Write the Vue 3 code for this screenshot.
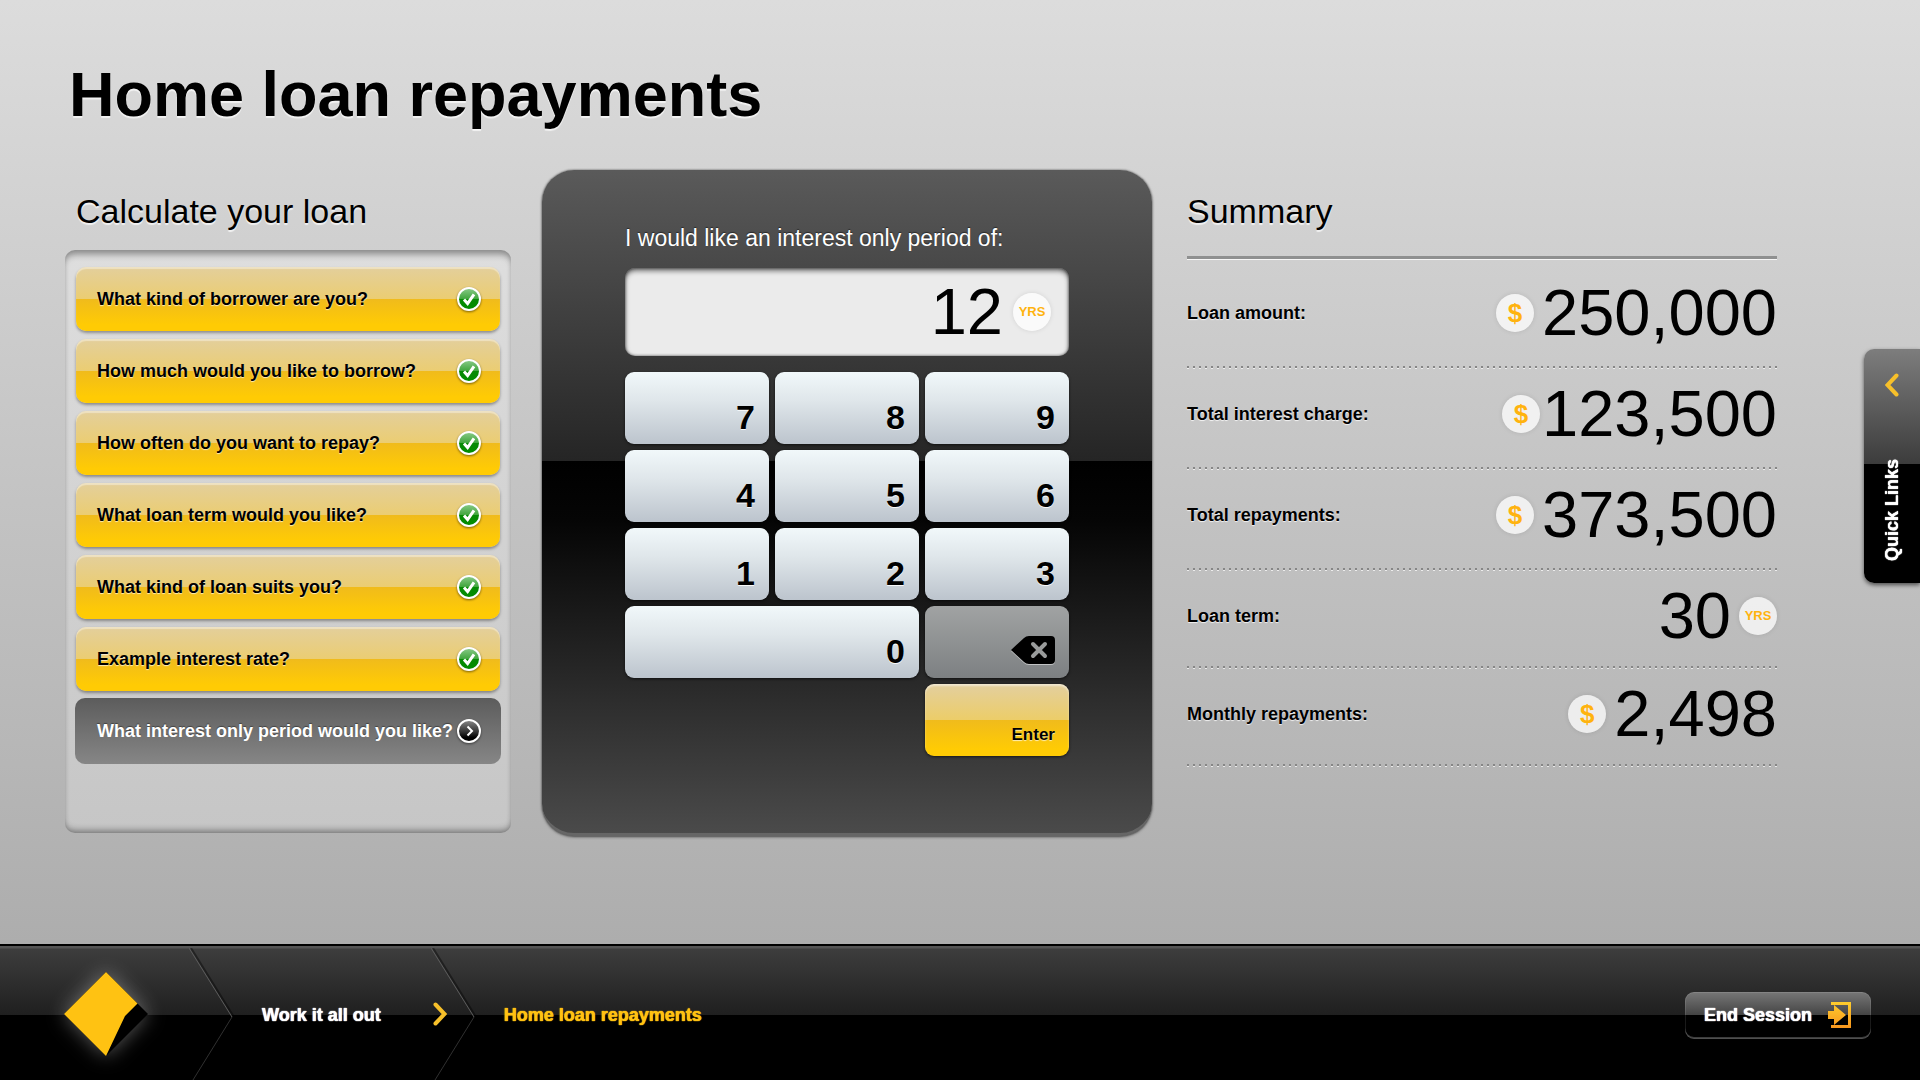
<script setup>
import { ref } from 'vue'

const steps = [
  'What kind of borrower are you?',
  'How much would you like to borrow?',
  'How often do you want to repay?',
  'What loan term would you like?',
  'What kind of loan suits you?',
  'Example interest rate?',
]

const digits = ['7', '8', '9', '4', '5', '6', '1', '2', '3', '0']

const summary = [
  { label: 'Loan amount:', unit: '$', value: '250,000' },
  { label: 'Total interest charge:', unit: '$', value: '123,500' },
  { label: 'Total repayments:', unit: '$', value: '373,500' },
  { label: 'Loan term:', unit: 'YRS', value: '30' },
  { label: 'Monthly repayments:', unit: '$', value: '2,498' },
]

const period = ref('12')
const press = (d) => { period.value += d }
const erase = () => { period.value = period.value.slice(0, -1) }
</script>

<template>
  <div class="page">
    <h1>Home loan repayments</h1>

    <main class="columns">
      <section class="steps">
        <h2>Calculate your loan</h2>
        <ol class="step-list">
          <li v-for="step in steps" :key="step">
            <button type="button" class="step">
              <span>{{ step }}</span>
              <svg class="step-icon" viewBox="0 0 26 26" aria-hidden="true">
                <defs>
                  <linearGradient id="tick-fill" x1="0" y1="0" x2="0" y2="1">
                    <stop offset="0" stop-color="#8ccb8a" />
                    <stop offset="0.5" stop-color="#3fa53c" />
                    <stop offset="0.52" stop-color="#078a05" />
                    <stop offset="1" stop-color="#028d00" />
                  </linearGradient>
                </defs>
                <circle cx="13" cy="13" r="11" fill="url(#tick-fill)" stroke="#fff" stroke-width="2" />
                <path d="M8 13.6l3.6 4L18 8.4" fill="none" stroke="#fff" stroke-width="3" />
              </svg>
            </button>
          </li>
          <li class="current-item">
            <button type="button" class="step current" aria-current="step">
              <span>What interest only period would you like?</span>
              <svg class="step-icon" viewBox="0 0 26 26" aria-hidden="true">
                <defs>
                  <linearGradient id="next-fill" x1="0" y1="0" x2="0" y2="1">
                    <stop offset="0" stop-color="#8a8a8a" />
                    <stop offset="0.55" stop-color="#303030" />
                    <stop offset="0.8" stop-color="#000" />
                  </linearGradient>
                </defs>
                <circle cx="13" cy="13" r="11" fill="url(#next-fill)" stroke="#fff" stroke-width="2" />
                <path d="M11.5 8.5l4.5 4.5-4.5 4.5" fill="none" stroke="#fff" stroke-width="2" />
              </svg>
            </button>
          </li>
        </ol>
      </section>

      <section class="keypad-card">
        <label for="period">I would like an interest only period of:</label>
        <div class="entry">
          <input id="period" v-model="period" type="text" inputmode="numeric">
          <span class="unit small">YRS</span>
        </div>
        <div class="keys">
          <button
            v-for="d in digits"
            :key="d"
            type="button"
            class="key"
            :class="{ wide: d === '0' }"
            @click="press(d)"
          >{{ d }}</button>
          <button type="button" class="key erase" aria-label="Delete" @click="erase">
            <svg viewBox="0 0 44 28" aria-hidden="true">
              <path d="M13 2Q15 0 18 0H40q4 0 4 4V24q0 4-4 4H18q-3 0-5-2L0 14z" fill="#000" />
              <path d="M22 8l12 12M34 8l-12 12" stroke="#999b9b" stroke-width="4" stroke-linecap="round" />
            </svg>
          </button>
          <button type="button" class="key enter">Enter</button>
        </div>
      </section>

      <section class="summary">
        <h2>Summary</h2>
        <dl>
          <div v-for="(row, i) in summary" :key="row.label" class="row" :class="{ compact: i > 2 }">
            <dt>{{ row.label }}</dt>
            <dd :class="{ tight: row.value.startsWith('1') }">
              <span v-if="row.unit === '$'" class="unit">$</span>
              <span>{{ row.value }}</span>
              <span v-if="row.unit !== '$'" class="unit small">{{ row.unit }}</span>
            </dd>
          </div>
        </dl>
      </section>
    </main>

    <button type="button" class="quick-links">
      <svg viewBox="0 0 14 24" aria-hidden="true">
        <path d="M11.500 2.500L2.500 12l9 9.500" />
      </svg>
      <span>Quick Links</span>
    </button>

    <footer>
      <nav aria-label="Breadcrumb">
        <a href="#" class="brand" aria-label="Home">
          <svg viewBox="0 0 84 84" aria-hidden="true">
            <path d="M42 0L84 42 42 84 0 42z" fill="#000" />
            <path d="M42 0L73.500 31.500 61 44 42 84 0 42z" fill="#ffc212" />
          </svg>
        </a>
        <svg class="divider" viewBox="0 0 46 132" aria-hidden="true">
          <path d="M0 0L43 69 4 132" stroke="#000" stroke-opacity="0.4" stroke-width="2" transform="translate(2 0)" />
          <path d="M0 0L43 69" stroke="#5c5c5c" />
          <path d="M43 69L4 132" stroke="#303030" />
        </svg>
        <a href="#" class="crumb">Work it all out</a>
        <svg class="arrow" viewBox="0 0 14 24" aria-hidden="true">
          <path d="M2.500 2.500L11.500 12l-9 9.500" />
        </svg>
        <svg class="divider over" viewBox="0 0 46 132" aria-hidden="true">
          <path d="M0 0L43 69 4 132" stroke="#000" stroke-opacity="0.4" stroke-width="2" transform="translate(2 0)" />
          <path d="M0 0L43 69" stroke="#5c5c5c" />
          <path d="M43 69L4 132" stroke="#303030" />
        </svg>
        <a href="#" class="crumb active" aria-current="page">Home loan repayments</a>
      </nav>
      <button type="button" class="end-session">
        <span>End Session</span>
        <svg viewBox="0 0 24 28" aria-hidden="true">
          <defs>
            <linearGradient id="exit-fill" gradientUnits="userSpaceOnUse" x1="0" y1="0" x2="0" y2="28">
              <stop offset="0" stop-color="#ffcf2e" />
              <stop offset="1" stop-color="#f7941d" />
            </linearGradient>
          </defs>
          <path d="M3 1H23V27H3V24H20V4H3z" fill="url(#exit-fill)" />
          <path d="M0 10H6V4L18 14 6 24V18H0z" fill="url(#exit-fill)" />
        </svg>
      </button>
    </footer>
  </div>
</template>

<style>
body {
  margin: 0;
}
</style>

<style scoped>
.page {
  position: relative;
  display: flex;
  flex-direction: column;
  min-height: 100vh;
  box-sizing: border-box;
  padding-top: 56px;
  background: linear-gradient(#dcdcdc, #adadad calc(100% - 136px));
  color: #000;
  font-family: "Liberation Sans", Arial, Helvetica, sans-serif;
}

button {
  font: inherit;
  border: 0;
  margin: 0;
  cursor: pointer;
}

h1,
h2 {
  margin: 0;
  text-shadow: 0 2px 1px rgba(255, 255, 255, 0.7);
}

h1 {
  padding-left: 69px;
  font-size: 63px;
  line-height: 76px;
}

h2 {
  font-size: 34px;
  line-height: 40px;
  font-weight: 400;
}

.columns {
  display: grid;
  grid-template-columns: minmax(0, 446fr) minmax(0, 610fr) minmax(0, 594fr);
  column-gap: 31px;
  align-items: start;
  padding: 38px 143px 40px 65px;
}

/* Steps */
.steps {
  padding-top: 21px;
}

.steps h2 {
  padding-left: 11px;
}

.step-list {
  display: flex;
  flex-direction: column;
  gap: 8px;
  margin: 19px 0 0;
  padding: 17px 11px 69px;
  list-style: none;
  border-radius: 10px;
  background: linear-gradient(#dedede, #c6c6c6);
  box-shadow:
    inset 0 7px 7px -3px rgba(0, 0, 0, 0.4),
    inset 0 -6px 7px -4px rgba(0, 0, 0, 0.45);
}

.step {
  display: flex;
  align-items: center;
  justify-content: space-between;
  width: 100%;
  height: 64px;
  padding: 0 18px 0 21px;
  border-radius: 10px;
  background: linear-gradient(#e3cf9c, #ebcd72 50%, #f0bb1c 50%, #ffcb04 90%);
  box-shadow: inset 0 2px 1px rgba(255, 255, 255, 0.4), 0 2px 3px rgba(0, 0, 0, 0.35);
  color: #000;
  font-size: 18px;
  line-height: 22px;
  font-weight: 700;
  text-align: left;
  white-space: nowrap;
  text-shadow: 0 1px 1px rgba(255, 255, 255, 0.7);
}

.current-item {
  margin: -1px -1px 0;
}

.step.current {
  height: 66px;
  padding: 0 19px 0 22px;
  background: linear-gradient(#5c5c5c, #868686);
  box-shadow: none;
  color: #fff;
  text-shadow: 0 -1px 1px rgba(0, 0, 0, 0.4);
}

.step-icon {
  flex: none;
  width: 26px;
  height: 26px;
  filter: drop-shadow(0 1px 1px rgba(0, 0, 0, 0.5));
}

/* Keypad */
.keypad-card {
  display: flex;
  flex-direction: column;
  padding: 54px 83px 80px;
  border-radius: 32px;
  background: linear-gradient(#5a5a5a, #252525 291px, #000 291px, #050505 350px, #4b4b4b);
  box-shadow:
    inset 0 -4px 0 -1px #666,
    0 0 2px rgba(0, 0, 0, 0.5),
    0 1px 3px rgba(0, 0, 0, 0.5);
}

.keypad-card label {
  color: #fff;
  font-size: 23px;
  line-height: 28px;
  text-shadow: 0 -1px 1px rgba(0, 0, 0, 0.5);
}

.entry {
  display: flex;
  align-items: center;
  gap: 10px;
  height: 88px;
  box-sizing: border-box;
  margin: 16px 0;
  padding: 0 18px;
  border-radius: 10px;
  background: #ebebeb;
  box-shadow: inset 0 3px 5px rgba(0, 0, 0, 0.5), inset 0 0 3px rgba(0, 0, 0, 0.6);
}

.entry input {
  flex: 1;
  min-width: 0;
  height: 72px;
  padding: 0;
  border: 0;
  outline: 0;
  background: none;
  color: #000;
  font: 65px/72px "Liberation Sans", Arial, Helvetica, sans-serif;
  text-align: right;
}

.unit {
  display: flex;
  flex: none;
  align-items: center;
  justify-content: center;
  width: 38px;
  height: 38px;
  border-radius: 50%;
  background: rgba(255, 255, 255, 0.75);
  box-shadow: 0 0 5px rgba(0, 0, 0, 0.1);
  color: #ffb30f;
  font-size: 26px;
  line-height: 38px;
  font-weight: 700;
}

.unit.small {
  font-size: 13px;
}

.keys {
  display: grid;
  grid-template-columns: repeat(3, 1fr);
  gap: 6px;
}

.key {
  display: flex;
  align-items: flex-end;
  justify-content: flex-end;
  height: 72px;
  padding: 0 14px 10px;
  border-radius: 9px;
  background: linear-gradient(#f1f8fa, #dfe6ea 40%, #bcc4cd);
  box-shadow: 0 1px 3px rgba(0, 0, 0, 0.6);
  color: #000;
  font-size: 34px;
  line-height: 34px;
  font-weight: 700;
  text-shadow: 0 1px 0 rgba(255, 255, 255, 0.9);
}

.key.wide {
  grid-column: span 2;
}

.key.erase {
  padding-bottom: 14px;
  background: linear-gradient(#a1a3a3, #7d8082);
}

.key.erase svg {
  width: 44px;
  height: 28px;
  filter: drop-shadow(0 1px 0 rgba(255, 255, 255, 0.5));
}

.key.enter {
  grid-column: 3;
  background: linear-gradient(#e3cf9f, #eccd68 50%, #f0bb1c 50%, #ffcb04 90%);
  box-shadow: inset 0 2px 2px rgba(255, 255, 255, 0.5), 0 1px 3px rgba(0, 0, 0, 0.6);
  font-size: 17px;
  line-height: 22px;
  text-shadow: 0 1px 1px rgba(255, 255, 255, 0.7);
}

/* Summary */
.summary {
  padding: 21px 0 0 4px;
}

.summary h2 {
  padding-bottom: 25px;
}

.summary dl {
  margin: 0;
  border-top: 3px solid #8f9090;
  box-shadow: inset 0 1px 0 rgba(255, 255, 255, 0.8);
}

.row {
  display: flex;
  align-items: center;
  justify-content: space-between;
  padding: 9px 0 20px;
  background:
    repeating-linear-gradient(90deg, #868686 0 2px, transparent 2px 6px) 0 calc(100% - 1px) / 100% 2px no-repeat,
    repeating-linear-gradient(90deg, rgba(255, 255, 255, 0.7) 0 2px, transparent 2px 6px) 0 100% / 100% 1px no-repeat;
}

.row:first-child {
  padding-top: 18px;
}

.row.compact {
  padding-bottom: 17px;
}

dt {
  font-size: 18px;
  line-height: 22px;
  font-weight: 700;
  text-shadow: 0 1px 1px rgba(255, 255, 255, 0.8);
}

dd {
  display: flex;
  align-items: center;
  gap: 8px;
  margin: 0;
  font-size: 65px;
  line-height: 72px;
}

dd.tight {
  gap: 2px;
}

/* Quick links tab */
.quick-links {
  position: absolute;
  top: 349px;
  right: 0;
  display: flex;
  flex-direction: column;
  align-items: center;
  justify-content: space-between;
  width: 56px;
  height: 234px;
  padding: 24px 12px 22px;
  border-radius: 10px 0 0 10px;
  background: linear-gradient(#7d7d7d, #3c3c3c 115px, #000 115px);
  box-shadow: 0 2px 4px rgba(0, 0, 0, 0.6);
  color: #fff;
  font-size: 18px;
  line-height: 22px;
  font-weight: 700;
}

.quick-links span {
  writing-mode: vertical-rl;
  transform: rotate(180deg);
  white-space: nowrap;
  text-shadow: 0 0 1px #fff, 0 0 1px #fff;
}

.quick-links svg,
.arrow {
  flex: none;
  width: 14px;
  height: 24px;
  fill: none;
  stroke: #f7c02a;
  stroke-width: 4;
  stroke-linecap: round;
}

/* Footer */
footer {
  display: flex;
  align-items: center;
  justify-content: space-between;
  height: 136px;
  box-sizing: border-box;
  margin-top: auto;
  padding: 2px 49px 0 64px;
  border-top: 2px solid #000;
  background: linear-gradient(#555 0 2px, #3d3d3d 3px, #1f1f1f 69px, #000 69px);
}

nav {
  display: flex;
  align-items: center;
}

.brand svg {
  display: block;
  width: 84px;
  height: 84px;
  filter: drop-shadow(0 0 10px rgba(255, 255, 255, 0.35));
}

.divider {
  flex: none;
  width: 46px;
  height: 132px;
  margin: 0 27px 0 41px;
  fill: none;
}

.divider.over {
  margin-left: -16px;
}

.crumb {
  padding-top: 2px;
  color: #fff;
  font-size: 18px;
  line-height: 22px;
  font-weight: 700;
  text-decoration: none;
  white-space: nowrap;
  text-shadow: 0 0 1px currentColor, 0 0 1px currentColor;
}

.crumb.active {
  color: #ffc212;
}

.arrow {
  margin-left: 52px;
}

.end-session {
  display: flex;
  align-items: center;
  gap: 16px;
  height: 47px;
  margin-top: 2px;
  padding: 0 19px;
  border-radius: 9px;
  background: linear-gradient(#777, #444 23px, #000 23px);
  box-shadow: inset 0 0 0 1px rgba(255, 255, 255, 0.1), inset 0 -2px 0 #3c3c3c;
  color: #fff;
  font-size: 18px;
  line-height: 22px;
  font-weight: 700;
  text-shadow: 0 0 1px #fff, 0 0 1px #fff;
}

.end-session svg {
  width: 24px;
  height: 28px;
}
</style>
